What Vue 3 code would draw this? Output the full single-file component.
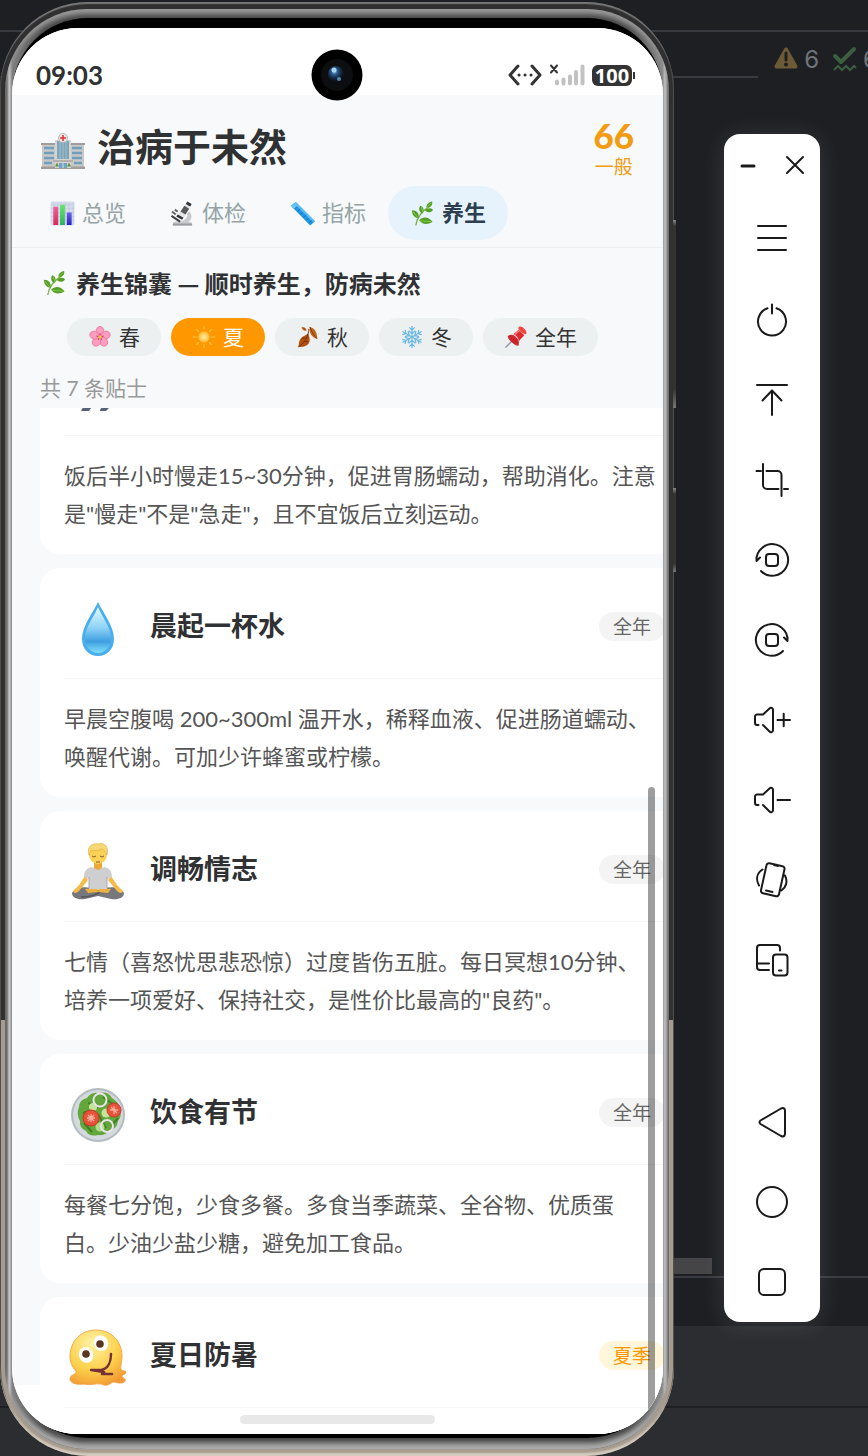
<template>
    <div class="desktop">
        <!-- shared emoji drawings -->
        <svg class="defs" width="0" height="0" aria-hidden="true">
            <defs>
                <linearGradient id="gDrop" x1="0" y1="0" x2="0" y2="1">
                    <stop offset="0" stop-color="#e6f8ff" /><stop offset=".45" stop-color="#8fd3f7" /><stop offset=".75" stop-color="#3f9fe0" /><stop offset="1" stop-color="#7fe0fb" />
                </linearGradient>
                <radialGradient id="gFace" cx=".4" cy=".25" r=".8">
                    <stop offset="0" stop-color="#fff3a8" /><stop offset=".6" stop-color="#fcd04a" /><stop offset="1" stop-color="#f29a33" />
                </radialGradient>
                <radialGradient id="gSun"><stop offset="0" stop-color="#fff0a0" /><stop offset="1" stop-color="#f7b72e" /></radialGradient>
                <linearGradient id="gRed" x1="0" y1="0" x2="0" y2="1"><stop offset="0" stop-color="#f0609a" /><stop offset="1" stop-color="#d42a58" /></linearGradient>
                <linearGradient id="gGreen" x1="0" y1="0" x2="0" y2="1"><stop offset="0" stop-color="#63e86a" /><stop offset="1" stop-color="#2fae62" /></linearGradient>
                <linearGradient id="gBlue" x1="0" y1="0" x2="0" y2="1"><stop offset="0" stop-color="#6a62f0" /><stop offset="1" stop-color="#2a20b8" /></linearGradient>
                <radialGradient id="gLens" cx=".4" cy=".35" r=".6"><stop offset="0" stop-color="#8fc8ec" /><stop offset=".3" stop-color="#2a5f92" /><stop offset=".7" stop-color="#14263f" /><stop offset="1" stop-color="#0c0f16" /></radialGradient>
            </defs>
            <symbol id="hospital" viewBox="0 0 44 36">
                <path d="M1 12h14v23H1zM29 12h14v23H29z" fill="#c9c8c6" />
                <path d="M0 10h15v2H0zM29 10h15v2H29zM0 33.500h44V36H0z" fill="#a09d9a" />
                <path d="M14 7h16v28H14z" fill="#d5d4d2" />
                <path d="M16 8h12v18H16z" fill="#7ba5b9" />
                <path d="M19 8v18M22 8v18M25 8v18" stroke="#b9ccd5" stroke-width=".7" />
                <path d="M3 15h10M3 20h10M3 25h10M3 30h8M31 15h10M31 20h10M31 25h10M33 30h8" stroke="#6f9fbd" stroke-width="2.400" />
                <path d="M12 27h20v2H12z" fill="#b3b0ad" />
                <path d="M18 30h8v5h-8z" fill="#6fa5c3" /><path d="M22 30v5" stroke="#ddd" />
                <path d="M16 29.500l2 4h-4zM28 29.500l2 4h-4z" fill="#5d9440" />
                <circle cx="22" cy="5" r="4.600" fill="#e9e7e5" stroke="#aaa" stroke-width=".7" />
                <path d="M22 2v6M19 5h6" stroke="#e53238" stroke-width="1.600" />
            </symbol>
            <symbol id="chart" viewBox="0 0 26 26">
                <rect x=".5" y=".5" width="25" height="25" rx="2" fill="#d6dcea" />
                <path d="M4 1v24M8 1v24M12 1v24M16 1v24M20 1v24M24 1v24M1 4h24M1 8h24M1 12h24M1 16h24M1 20h24" stroke="#b9c3da" stroke-width=".6" />
                <path d="M3.500 6h5v19h-5z" fill="url(#gRed)" /><path d="M10.500 4h5v21h-5z" fill="url(#gGreen)" /><path d="M17.500 12h5v13h-5z" fill="url(#gBlue)" />
            </symbol>
            <symbol id="microscope" viewBox="0 0 26 26">
                <path d="M3 23.500c0-2 3-2.500 8-2.500 6-1 8-5 6.500-8l3-2c3.500 5 1.500 9-1.500 11h3.500v3.500H3z" fill="#c9cacd" />
                <path d="M3 23.500h20v2H3z" fill="#9b9ca0" />
                <path d="M17 2l5 3-8 13-6-3.500z" fill="#e3e4e6" /><path d="M15 5l5 3-4 6-5-3z" fill="#58595d" />
                <path d="M18 .5l4.500 2.700-1.500 2.500-4.500-2.700zM8 14l6 3.500-1.500 2L6.500 16z" fill="#303136" />
                <path d="M1.500 15.500l9 6" stroke="#3b3c40" stroke-width="2" /><path d="M2 11l4 3M5 9l3 2" stroke="#66676b" stroke-width="2" />
            </symbol>
            <symbol id="ruler" viewBox="0 0 26 26">
                <path d="M1 5l5-4 20 20-5 4.500z" fill="#1f95e6" /><path d="M1 5l5-4 3 3-5 4.500z" fill="#66c3fa" />
                <path d="M7 2l19 19-1.500 1.300L5 3.500z" fill="#5fbdf6" />
                <path d="M5 8l2-2M8 11l3-3M11 14l2-2M14 17l3-3M17 20l2-2M20 23l3-3" stroke="#0b66ad" stroke-width=".8" />
            </symbol>
            <symbol id="herb" viewBox="0 0 26 26">
                <path d="M6 25.500C7 17 13 10 21 5" fill="none" stroke="#7fb347" stroke-width="1.400" />
                <g fill="#559f24">
                    <path d="M23 .5c1 4-2 6.500-6 6 0-3 2.500-5.500 6-6zM24 9c-2 3.500-6 3.500-8.500 1 2.500-3 6-3 8.500-1zM10.500 5c4 1 4.500 5 2.500 8-3-1-4.500-4-2.500-8zM2 9.500c5 0 8 3.500 7 8.500-4.500-.5-7-4-7-8.500zM9.500 20c4-4.500 10-3.500 14 1.500-5 3.500-11 3-14-1.500z" />
                </g>
                <path d="M3 11l5 6M11 20.500l11 1M12 6.500l1 5M22 2l-4 4" stroke="#93cf58" stroke-width=".8" />
            </symbol>
            <symbol id="blossom" viewBox="0 0 24 24">
                <g fill="#fb9fc2" stroke="#e8638f" stroke-width=".7">
                    <ellipse cx="12" cy="5.500" rx="4.300" ry="5" />
                    <ellipse cx="12" cy="5.500" rx="4.300" ry="5" transform="rotate(72 12 12)" />
                    <ellipse cx="12" cy="5.500" rx="4.300" ry="5" transform="rotate(144 12 12)" />
                    <ellipse cx="12" cy="5.500" rx="4.300" ry="5" transform="rotate(216 12 12)" />
                    <ellipse cx="12" cy="5.500" rx="4.300" ry="5" transform="rotate(288 12 12)" />
                </g>
                <path d="M12 12V8M12 12l4-1M12 12l2 3M12 12l-2 3M12 12l-4-1" stroke="#c93468" stroke-width="1.200" />
                <circle cx="12" cy="12" r="2" fill="#f2c444" />
            </symbol>
            <symbol id="sun" viewBox="0 0 24 24">
                <path d="M12 0v4M12 20v4M0 12h4M20 12h4M3.500 3.500l2.800 2.800M17.700 17.700l2.800 2.800M20.500 3.500l-2.800 2.800M3.500 20.500l2.800-2.800" stroke="#fbc94d" stroke-width="1.200" />
                <circle cx="12" cy="12" r="6.300" fill="url(#gSun)" />
            </symbol>
            <symbol id="leaves" viewBox="0 0 24 24">
                <path d="M14 1c5 1 8 5 8 13-6-2-9-6-8-13z" fill="#c2661c" /><path d="M14 1c2 5 4 9 8 13" stroke="#7c350c" fill="none" />
                <path d="M5 1c3 0 5 1 5.500 4-3 .5-5-1-5.500-4z" fill="#b4560f" />
                <path d="M12 8c2 5 3 9 0 12-3 3-7 3-11 3 2-3 0-5 3-9 2-3 5-3 8-6z" fill="#b5500f" />
                <path d="M13 3c0 7-4 14-11 20M9 13l-4 1M8 17l4 0M9.500 13l2 0" stroke="#70300b" fill="none" />
            </symbol>
            <symbol id="snow" viewBox="0 0 24 24">
                <g stroke="#6db8e2" stroke-width="1.300" fill="none">
                    <path id="arm" d="M12 12V0M9 1.500l3 3 3-3M8.500 5l3.500 3.500L15.500 5" />
                    <use href="#arm" transform="rotate(60 12 12)" /><use href="#arm" transform="rotate(120 12 12)" /><use href="#arm" transform="rotate(180 12 12)" /><use href="#arm" transform="rotate(240 12 12)" /><use href="#arm" transform="rotate(300 12 12)" />
                </g>
            </symbol>
            <symbol id="pin" viewBox="0 0 24 24">
                <path d="M9 15L.5 23.500" stroke="#8d99a3" stroke-width="1.600" />
                <path d="M3 11c3-2 6-2 9 1s4 6 2.500 9.500c-2 0-5-1.500-7.500-4S3 13 3 11z" fill="#c9252b" />
                <path d="M9 9l6-5 6 6-6 6.500c0-3-3-7-6-7.500z" fill="#e0292c" />
                <path d="M15 1c2-1 4 0 6 2s3 4 2 6c-2 0-4-1-6-3s-3-3-2-5z" fill="#f04741" /><path d="M11 9l5-4" stroke="#ff8d85" stroke-width="1.300" />
            </symbol>
            <symbol id="walk" viewBox="0 0 60 60">
                <circle cx="31" cy="4" r="6" fill="#fbc84b" /><path d="M25 12h11l3 18H24z" fill="#5b86c4" />
                <path d="M27 29l-3 12-5 9M34 29l4 10 1 11" stroke="#4b5873" stroke-width="6" fill="none" />
                <path d="M13 55c1-3 4-6 9-7l1 4-2 3zM32 55c0-2 2-5 8-7l1 4-3 3z" fill="#55627a" />
            </symbol>
            <symbol id="drop" viewBox="0 0 60 60">
                <path d="M30 3C25 14 14 27 14 40c0 10 7 17 16 17s16-7 16-17C46 27 35 14 30 3z" fill="#48aeee" />
                <path d="M30 8c-4 10-13 20-13 31 0 8 5 15 13 15s13-7 13-15C43 28 34 18 30 8z" fill="url(#gDrop)" />
            </symbol>
            <symbol id="meditate" viewBox="0 0 60 60">
                <path d="M4 51c3-6 14-8 26-3 12-5 23-3 26 3 0 5-6 7-13 6l-13-3-13 3c-7 1-13-1-13-6z" fill="#77787b" />
                <path d="M13 55c7 0 15-1 22-7" stroke="#55565a" stroke-width="1.500" fill="none" />
                <path d="M17 34L11 43 5 49c1 3 4 2 6 0l9-11zM43 34l6 9 6 6c-1 3-4 2-6 0l-9-11z" fill="#f5ba48" />
                <path d="M17 47l12-1 1 4-10 1zM43 47l-12-1-1 4 10 1z" fill="#efb03f" />
                <path d="M26 20h8v8h-8z" fill="#eba937" />
                <path d="M24 25l6 3 6-3c6 1 8 5 8 10l-5 2v10H21V37l-5-2c0-5 2-9 8-10z" fill="#cfcfd2" /><path d="M21 35v11M39 35v11" stroke="#a9a9ae" />
                <circle cx="30" cy="13" r="9" fill="#fbd158" />
                <path d="M21 13C18 3 26 1 30 2c7-2 11 3 9 11-1-3-3-5-5-6-4 2-8 2-11 1z" fill="#f6d877" stroke="#d9ab39" stroke-width=".6" />
                <path d="M24 14q2 2 4 0M32 14q2 2 4 0M28 20h4" stroke="#885b24" fill="none" />
            </symbol>
            <symbol id="salad" viewBox="0 0 60 60">
                <circle cx="30" cy="30" r="27" fill="#b4bcc1" /><circle cx="30" cy="30" r="25" fill="#d3d9dd" />
                <path d="M11 22q0-7 8-9 4-6 12-5 9-2 13 5 7 4 7 10 4 7-1 13-1 8-8 9-4 6-12 5-9 2-12-4-7-3-6-10-4-7-1-14z" fill="#62a63c" />
                <path d="M16 38l8 9M20 18l10 4M44 40l6-7M30 29l8 14M35 12l11 8M15 28l8-3" stroke="#3d8022" stroke-width="2" />
                <circle cx="25" cy="22" r="4" fill="#c4e49a" /><circle cx="38" cy="28" r="4.500" fill="#c4e49a" /><circle cx="32" cy="42" r="4.500" fill="#b4dc88" />
                <circle cx="23" cy="33" r="8" fill="#e8523b" stroke="#c73a2a" /><path d="M23 29v8M19 33h8M20 30l6 6M26 30l-6 6" stroke="#ffb09a" stroke-width="1.300" />
                <circle cx="46" cy="25" r="7" fill="#e8523b" stroke="#c73a2a" /><path d="M46 21v8M42 25h8M43 22l6 6" stroke="#ffb09a" stroke-width="1.300" />
                <circle cx="32" cy="15" r="6.500" fill="none" stroke="#eae3ea" stroke-width="2" /><circle cx="39" cy="41" r="6" fill="none" stroke="#eae3ea" stroke-width="2" />
            </symbol>
            <symbol id="melting" viewBox="0 0 60 60">
                <path d="M28 2c16 0 26 12 26 26 0 7-2 10-1 13 1 3 5 1 5 3 0 3-4 2-4 4s4 2 3 5c-2 4-9 1-12 1-3 1-4 4-9 3-7-3-12 1-20-1-8 1-14-1-14-5 0-5 7-4 6-8-4-4-6-9-6-14C2 13 13 2 28 2z" fill="url(#gFace)" stroke="#ee9b3c" stroke-width=".8" />
                <ellipse cx="18" cy="27" rx="7" ry="8" fill="#fff" transform="rotate(-25 18 27)" /><ellipse cx="33" cy="15" rx="7" ry="8" fill="#fff" transform="rotate(-25 33 15)" />
                <circle cx="18" cy="26" r="3.800" fill="#5c3520" /><circle cx="32" cy="16" r="3.800" fill="#5c3520" />
                <path d="M43 26c0 8-3 15-10 16H23l13 2-2 2h10" fill="none" stroke="#76303a" stroke-width="2.500" stroke-linecap="round" stroke-linejoin="round" />
            </symbol>
        </svg>

        <div class="ide" aria-hidden="true">
            <div class="ide-title"></div>
            <div class="ide-tabs">
                <span class="inspections">
                    <svg width="26" height="26" viewBox="0 0 26 26"><path d="M13 3.500L22.500 20.500H3.500z" fill="#6d5a36" stroke="#6d5a36" stroke-width="4" stroke-linejoin="round" /><path d="M13 7v7" stroke="#1e1f22" stroke-width="3" stroke-linecap="round" /><circle cx="13" cy="18.500" r="2" fill="#1e1f22" /></svg>
                    <b>6</b>
                    <svg class="typo" width="26" height="28" viewBox="0 0 26 28"><path d="M3 11l6 6L22 4" fill="none" stroke="#3c5f3f" stroke-width="4" stroke-linecap="round" stroke-linejoin="round" /><path d="M2 25l4-4 4 4 4-4 4 4 4-4 2 2" fill="none" stroke="#3c5f3f" stroke-width="2" /></svg>
                    <b>6</b>
                </span>
            </div>
            <div class="ide-editor"><div class="ide-scroll"></div></div>
            <div class="ide-panel"></div>
            <div class="ide-tool"></div>
            <div class="ide-status"></div>
        </div>

        <div class="phone">
            <span class="side-key volume"></span>
            <span class="side-key power"></span>
            <div class="rim">
                <div class="glass">
                    <div class="screen">
                        <div class="status-bar">
                            <time>09:03</time>
                            <svg class="camera" width="52" height="52" viewBox="0 0 52 52" aria-hidden="true"><circle cx="26" cy="26" r="25.500" fill="#000" /><circle cx="26" cy="26" r="16" fill="#0d0e10" /><circle cx="25" cy="25" r="8" fill="url(#gLens)" /><circle cx="23" cy="21" r="2.500" fill="#a6d6f2" /><circle cx="28" cy="30" r="2" fill="#4f87b5" /></svg>
                            <div class="status-icons">
                                <svg width="34" height="22" viewBox="0 0 34 22" fill="none" stroke="#333" stroke-width="3" stroke-linecap="round" stroke-linejoin="round"><path d="M10 2L2 11l8 9M24 2l8 9-8 9" /><path d="M11 11h.1M17 11h.1M23 11h.1" /></svg>
                                <svg width="36" height="22" viewBox="0 0 36 22" stroke-linecap="round"><path d="M2 1.500l6 7M8 1.500l-6 7" stroke="#333" stroke-width="2" /><path d="M8 17.500v2M14.500 15.500v4M21 12.500v7M27 8v11.500M33.500 2.500v17" stroke="#c2c2c2" stroke-width="4" /></svg>
                                <span class="battery">100</span>
                            </div>
                        </div>

                        <header class="app-head">
                            <svg class="logo" width="44" height="36"><use href="#hospital" /></svg>
                            <h1>治病于未然</h1>
                            <div class="score"><strong>66</strong><span>一般</span></div>
                        </header>
                        <nav class="tabs">
                            <button v-for="(item, idx) in tabs" :key="idx" type="button" :class="{ active: idx === activeTab }" @click="activeTab = idx">
                                <svg width="25" height="25"><use :href="'#' + item.icon" /></svg><span>{{ item.name }}</span>
                            </button>
                        </nav>

                        <section class="intro">
                            <h2><svg width="25" height="26"><use href="#herb" /></svg>养生锦囊 — 顺时养生，防病未然</h2>
                            <div class="chips">
                                <button v-for="(item, idx) in seasons" :key="idx" type="button" :class="{ active: idx === activeSeason }" @click="activeSeason = idx">
                                    <svg width="22" height="22"><use :href="'#' + item.icon" /></svg><span>{{ item.name }}</span>
                                </button>
                            </div>
                            <p class="count">共 7 条贴士</p>
                        </section>

                        <div class="tips">
                            <div class="tip-list" ref="list">
                                <article v-for="tip in tips" :key="tip.title" class="card">
                                    <div class="card-head">
                                        <svg width="60" height="60"><use :href="'#' + tip.icon" /></svg>
                                        <h3>{{ tip.title }}</h3>
                                        <span class="badge" :class="{ summer: tip.season === '夏季' }">{{ tip.season }}</span>
                                    </div>
                                    <p>{{ tip.text }}</p>
                                </article>
                            </div>
                            <span class="thumb"></span>
                            <span class="home-bar"></span>
                        </div>
                    </div>
                </div>
            </div>
        </div>

        <aside class="remote">
            <div class="remote-head">
                <button type="button" aria-label="最小化"><svg width="20" height="20" viewBox="0 0 20 20"><path d="M4 11h12" stroke-width="3" /></svg></button>
                <button type="button" aria-label="关闭"><svg width="20" height="20" viewBox="0 0 20 20"><path d="M2 2l16 16M18 2L2 18" /></svg></button>
            </div>
            <button v-for="t in tools" :key="t.label" type="button" class="tool" :class="{ nav: t.label === '返回' }" :aria-label="t.label">
                <svg width="40" height="40" viewBox="0 0 40 40"><path :d="t.d" /></svg>
            </button>
        </aside>
    </div>
</template>

<script setup>
import { ref, onMounted } from 'vue'

const activeTab = ref(3)
const activeSeason = ref(1)
const list = ref(null)

const tabs = [
    { icon: 'chart', name: '总览' },
    { icon: 'microscope', name: '体检' },
    { icon: 'ruler', name: '指标' },
    { icon: 'herb', name: '养生' },
]

const seasons = [
    { icon: 'blossom', name: '春' },
    { icon: 'sun', name: '夏' },
    { icon: 'leaves', name: '秋' },
    { icon: 'snow', name: '冬' },
    { icon: 'pin', name: '全年' },
]

const tips = [
    { icon: 'walk', title: '', season: '', text: '饭后半小时慢走15~30分钟，促进胃肠蠕动，帮助消化。注意\n是"慢走"不是"急走"，且不宜饭后立刻运动。' },
    { icon: 'drop', title: '晨起一杯水', season: '全年', text: '早晨空腹喝 200~300ml 温开水，稀释血液、促进肠道蠕动、\n唤醒代谢。可加少许蜂蜜或柠檬。' },
    { icon: 'meditate', title: '调畅情志', season: '全年', text: '七情（喜怒忧思悲恐惊）过度皆伤五脏。每日冥想10分钟、\n培养一项爱好、保持社交，是性价比最高的"良药"。' },
    { icon: 'salad', title: '饮食有节', season: '全年', text: '每餐七分饱，少食多餐。多食当季蔬菜、全谷物、优质蛋\n白。少油少盐少糖，避免加工食品。' },
    { icon: 'melting', title: '夏日防暑', season: '夏季', text: '' },
]

const tools = [
    { label: '菜单', d: 'M6 6h28M6 18h28M6 30h28' },
    { label: '电源', d: 'M15.500 8.300a14 14 0 1 0 9 0M20 4.500v9' },
    { label: '置顶', d: 'M5 5h30M20 10.500V35M10.500 20.500l9.500-10 9.500 10' },
    { label: '截图', d: 'M11 4v21a4 4 0 0 0 4 4h11.500M4.500 11H9M14.500 11h11a4 4 0 0 1 4 4v21M32 29h4' },
    { label: '向左旋转', d: 'M4.500 20.500A15.800 15.800 0 1 1 9 31M4.500 17v4l3.500-3.500M17 14h6a3 3 0 0 1 3 3v6a3 3 0 0 1-3 3h-6a3 3 0 0 1-3-3v-6a3 3 0 0 1 3-3z' },
    { label: '向右旋转', d: 'M35.500 20.500A15.800 15.800 0 1 0 31 31M35.500 17v4L32 17.500M17 14h6a3 3 0 0 1 3 3v6a3 3 0 0 1-3 3h-6a3 3 0 0 1-3-3v-6a3 3 0 0 1 3-3z' },
    { label: '音量加', d: 'M6.500 25H5a2 2 0 0 1-2-2v-6.500a2 2 0 0 1 2-2h6l6.500-6c1.300-1.200 3.500-.6 3.500 1.300v20.400c0 2-2.200 2.600-3.500 1.300L11 25M25.500 20H38M31.700 13.700v12.600' },
    { label: '音量减', d: 'M6.500 25H5a2 2 0 0 1-2-2v-6.500a2 2 0 0 1 2-2h6l6.500-6c1.300-1.200 3.500-.6 3.500 1.300v20.400c0 2-2.200 2.600-3.500 1.300L11 25M25.500 20H38' },
    { label: '摇一摇', d: 'M17.500 3.200l13 3a2.500 2.500 0 0 1 2 3l-5.500 25a2.500 2.500 0 0 1-3 2l-13-3a2.500 2.500 0 0 1-2-3l5.500-25a2.500 2.500 0 0 1 3-2zM22 5l4 1M14 30.500l6.500 1.500M10.500 9.500C5 13 3.500 19 7 25.500M33 15.500c3 6 1 12-3.500 15' },
    { label: '多设备', d: 'M28 10.500V8a3 3 0 0 0-3-3H8a3 3 0 0 0-3 3v19a3 3 0 0 0 3 3h9M5 23.500h12M24 14.500h8.500a3 3 0 0 1 3 3v15a3 3 0 0 1-3 3H24a3 3 0 0 1-3-3v-15a3 3 0 0 1 3-3zM27 30.500h2.500' },
    { label: '返回', d: 'M8.500 18.500L29 6.500q3.500-1.500 4 2v23.500q-.5 3.500-4 2L8.500 22q-2-1.700 0-3.500z' },
    { label: '主页', d: 'M20 5a15 15 0 1 0 0 30 15 15 0 0 0 0-30z' },
    { label: '最近任务', d: 'M12 7h16a5 5 0 0 1 5 5v16a5 5 0 0 1-5 5H12a5 5 0 0 1-5-5V12a5 5 0 0 1 5-5z' },
]

onMounted(() => {
    list.value.scrollTop = 83
})
</script>

<style>
body {
    background: #1e1f22;
}
</style>

<style scoped>
* {
    box-sizing: border-box;
}

.desktop {
    position: relative;
    display: grid;
    grid-template-columns: minmax(0, 1fr) 96px;
    gap: 50px;
    height: 100vh;
    padding: 2px 48px 0 0;
    overflow: hidden;
    font-family: Lato, "Noto Sans CJK SC", sans-serif;
    color: #303133;
}

h1, h2, h3, p {
    margin: 0;
}

button {
    border: 0;
    padding: 0;
    background: none;
    font: inherit;
    color: inherit;
    white-space: nowrap;
    cursor: pointer;
}

svg {
    display: block;
    flex: none;
}

.defs {
    position: absolute;
}

/* editor window behind */
.ide {
    position: absolute;
    inset: 0;
    display: flex;
    flex-direction: column;
    background: #1e1f22;
}

.ide-title {
    height: 32px;
    border-bottom: 2px solid #393b40;
}

.ide-tabs {
    height: 46px;
    display: flex;
    justify-content: flex-end;
    margin-right: 110px;
    border-bottom: 2px solid #393b40;
}

.inspections {
    display: flex;
    align-items: center;
    gap: 5px;
    height: 54px;
    margin-right: -120px;
    color: #6f737a;
    font-size: 24px;
}

.inspections b {
    font-family: Inter, sans-serif;
    font-weight: 400;
}

.typo {
    margin-left: 8px;
}

.ide-editor {
    flex: 1;
    display: flex;
    align-items: flex-end;
}

.ide-scroll {
    width: 82%;
    height: 16px;
    margin-bottom: 2px;
    background: #454547;
}

.ide-panel {
    height: 50px;
    border-top: 2px solid #393b40;
}

.ide-tool {
    height: 82px;
    background: #2b2d30;
    border-bottom: 2px solid #1e1f22;
}

.ide-status {
    height: 48px;
    background: #2b2d30;
}

/* phone body */
.phone {
    position: relative;
    min-height: 0;
    padding: 7px 5px;
    border-radius: 88px;
    background: linear-gradient(#303030 70%, #a59b8e 70%);
    box-shadow: inset 0 3px 1px -1px #777, inset 0 -4px 2px -1px #d6cdbf, inset 0 0 0 1px #484848;
}

.rim {
    height: 100%;
    padding: 9px 6px 11px 7px;
    border-radius: 82px;
    background: linear-gradient(90deg, #4a4a4a, #6e6e6e 2px, #c8c8c8 4px, #c0c0c0 5px, #808080 7px, #484848 40px, #484848 calc(100% - 40px), #8a8a8a calc(100% - 6px), #bababa calc(100% - 5px), #b4b4b4 calc(100% - 3px), #6a6a6a calc(100% - 1px), #4a4a4a);
    box-shadow: inset 0 7px 5px -2px #999, inset 0 -8px 5px -2px #aaa;
}

.glass {
    height: 100%;
    padding: 10px 0 4px;
    border-radius: 76px;
    background: #000;
}

.side-key {
    position: absolute;
    right: -2px;
    width: 3px;
    background: linear-gradient(#8a8a8a, #333 6px, #333 90%, #777);
}

.volume {
    top: 218px;
    height: 188px;
}

.power {
    top: 486px;
    height: 84px;
}

.screen {
    display: flex;
    flex-direction: column;
    height: 100%;
    border-radius: 66px;
    overflow: hidden;
    background: #f7f9fb;
}

.status-bar {
    position: relative;
    display: flex;
    align-items: center;
    justify-content: space-between;
    height: 67px;
    flex: none;
    padding: 27px 28px 0 24px;
    background: #fff;
}

.status-bar time {
    font-size: 26px;
    font-weight: 700;
    line-height: 40px;
}

.camera {
    position: absolute;
    left: 50%;
    top: 21px;
    margin-left: -27px;
    z-index: 1;
}

.status-icons {
    display: flex;
    align-items: center;
    gap: 7px;
}

.battery {
    position: relative;
    width: 40px;
    height: 21px;
    margin-right: 3px;
    border-radius: 6px;
    background: #333;
    color: #fff;
    font: 700 20px/21px "Open Sans", sans-serif;
    text-align: center;
}

.battery::after {
    content: "";
    position: absolute;
    right: -3px;
    top: 7px;
    width: 2px;
    height: 7px;
    background: #333;
}

/* app header */
.app-head {
    display: flex;
    align-items: flex-start;
    height: 91px;
    flex: none;
    padding: 23px 29px 0 29px;
}

.logo {
    margin-top: 15px;
}

h1 {
    flex: 1;
    margin-left: 12px;
    font-size: 38px;
    line-height: 56px;
}

.score {
    display: flex;
    flex-direction: column;
    align-items: center;
    color: #f39c12;
}

.score strong {
    font-size: 35px;
    font-weight: 900;
    line-height: 34px;
}

.score span {
    font-size: 19px;
    line-height: 30px;
}

.tabs {
    display: flex;
    flex: none;
    padding: 0 16px 7px;
    border-bottom: 1px solid #eceff1;
}

.tabs button {
    display: flex;
    align-items: center;
    justify-content: center;
    gap: 7px;
    width: 120px;
    height: 54px;
    border-radius: 27px;
    font-size: 22px;
    color: #95a5a6;
}

.tabs span {
    padding-bottom: 4px;
}

.tabs .active {
    background: #e6f3fd;
    color: #2c3e50;
    font-weight: 700;
}

.intro {
    flex: none;
    padding: 20px 28px 5px;
}

h2 {
    display: flex;
    align-items: center;
    gap: 9px;
    padding-left: 2px;
    font-family: "Noto Sans CJK SC", sans-serif;
    font-size: 24px;
    line-height: 30px;
}

.chips {
    display: flex;
    gap: 10px;
    margin-top: 20px;
    padding-left: 27px;
}

.chips button {
    display: flex;
    align-items: center;
    gap: 8px;
    height: 38px;
    padding: 0 21px 0 22px;
    border-radius: 19px;
    background: #ecf0f1;
    font-size: 21px;
    color: #333;
}

.chips span {
    padding-bottom: 3px;
}

.chips .active {
    background: #ff9800;
    color: #fff;
}

.count {
    margin-top: 17px;
    font-size: 21px;
    line-height: 30px;
    color: #999;
}

/* tip cards run past the right edge of the screen */
.tips {
    position: relative;
    flex: 1;
    min-height: 0;
    background: linear-gradient(#f7f9fb calc(100% - 49px), #fff calc(100% - 49px));
}

.tip-list {
    display: flex;
    flex-direction: column;
    gap: 14px;
    height: 100%;
    margin-right: -26px;
    padding-left: 28px;
    overflow-y: auto;
    scrollbar-width: none;
}

.card {
    flex: none;
    min-height: 229px;
    padding: 0 24px 21px;
    border-radius: 20px;
    background: #fff;
}

.card-head {
    display: flex;
    align-items: center;
    height: 111px;
    padding: 14px 0 2px 4px;
    border-bottom: 1px solid #f3f5f6;
}

h3 {
    flex: 1;
    margin: 0 0 6px 22px;
    font-size: 27px;
    line-height: 40px;
}

.badge {
    height: 29px;
    margin-bottom: 6px;
    padding: 0 14px;
    border-radius: 15px;
    background: #f4f4f4;
    font-size: 19px;
    line-height: 29px;
    color: #666;
}

.badge:empty {
    display: none;
}

.badge.summer {
    background: #fff6dc;
    color: #ff9800;
}

.card p {
    padding-top: 21px;
    font-size: 22px;
    line-height: 38px;
    color: #555;
    white-space: pre;
}

.thumb {
    position: absolute;
    top: 379px;
    right: 8px;
    bottom: 0;
    width: 7px;
    border-radius: 4px;
    background: rgba(0, 0, 0, .38);
}

.home-bar {
    position: absolute;
    left: 35%;
    right: 35%;
    bottom: 10px;
    height: 9px;
    border-radius: 5px;
    background: #e8e8e8;
}

/* emulator controls */
.remote {
    position: relative;
    align-self: start;
    display: flex;
    flex-direction: column;
    margin-top: 132px;
    border-radius: 16px;
    background: #fff;
    box-shadow: 0 2px 24px rgba(255, 255, 255, .12);
}

.remote svg {
    fill: none;
    stroke: #1a1a1a;
    stroke-width: 2;
    stroke-linecap: round;
    stroke-linejoin: round;
}

.remote-head {
    display: flex;
    align-items: center;
    justify-content: space-between;
    height: 66px;
    padding: 0 15px 4px 14px;
}

.tool {
    display: flex;
    align-items: center;
    justify-content: center;
    height: 80px;
}

.tool.nav {
    margin-top: 82px;
}
</style>
